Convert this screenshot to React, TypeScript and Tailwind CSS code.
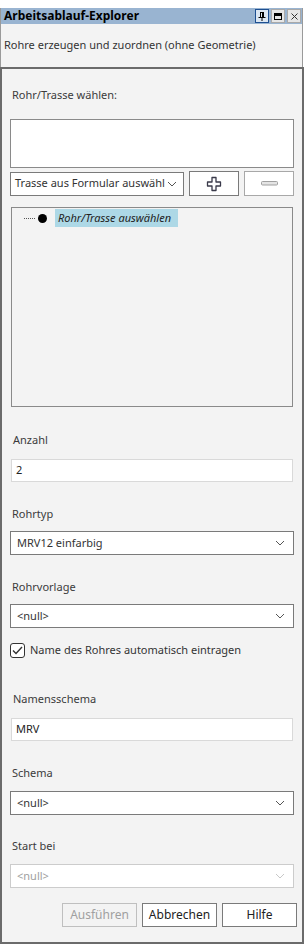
import React from 'react';

const font = { fontFamily: '"Noto Sans", "Open Sans", sans-serif' };

// kleiner Pfeil für Auswahllisten
function Chevron({ disabled }: { disabled?: boolean }) {
  return (
    <svg width="10" height="6" viewBox="0 0 10 6" className="shrink-0">
      <path d="M1 1 L5 5 L9 1" fill="none" stroke={disabled ? '#c8c8c8' : '#555'} strokeWidth="1" />
    </svg>
  );
}

function Select({ value, disabled }: { value: string; disabled?: boolean }) {
  return (
    <div
      className={`flex h-6 items-center justify-between border bg-white pl-1.5 pr-2 text-[11px] ${
        disabled ? 'border-[#cccccc] text-[#a0a0a0]' : 'border-[#7a7a7a] text-[#333]'
      }`}
    >
      <span>{value}</span>
      <Chevron disabled={disabled} />
    </div>
  );
}

function Label({ children, className = '' }: { children: React.ReactNode; className?: string }) {
  return <div className={`h-4 text-[11px] leading-4 text-[#3b3b3b] ${className}`}>{children}</div>;
}

function TextInput({ value }: { value: string }) {
  return (
    <div className="mx-px flex h-[23px] items-center border border-[#d9d9d9] bg-white pl-1 text-[11px] text-[#222]">
      {value}
    </div>
  );
}

function TitleButton({ children, active }: { children: React.ReactNode; active?: boolean }) {
  return (
    <div
      className={`flex h-[14px] w-[14px] items-center justify-center border ${
        active ? 'border-[#1d4f91] bg-[#dbe6f2]' : 'border-[#a9a9a9] bg-[#e6e6e6]'
      }`}
    >
      {children}
    </div>
  );
}

export default function App() {
  return (
    <div className="flex h-[946px] w-[304px] flex-col bg-white" style={font}>
      <div className="h-2" />

      {/* Kopfbereich */}
      <div className="w-[303px] border-x border-[#9a9a9a]">
        <div className="flex h-4 items-center justify-between bg-[#99b4d1] pl-[3px] pr-[1px]">
          <span className="text-[12px] font-bold leading-4 text-black">Arbeitsablauf-Explorer</span>
          <div className="flex gap-[2px]">
            <TitleButton active>
              <svg width="8" height="9" viewBox="0 0 8 9">
                <path d="M2 0.5 H6 M2.5 0.5 V5 M5.5 0.5 V5 M0.5 5.5 H7.5 M4 5.5 V9" stroke="#000" strokeWidth="1" fill="none" />
                <rect x="4" y="1" width="1" height="4" fill="#000" />
              </svg>
            </TitleButton>
            <TitleButton>
              <svg width="8" height="7" viewBox="0 0 8 7">
                <rect x="0.5" y="0.5" width="7" height="6" fill="none" stroke="#000" />
                <rect x="0" y="0" width="8" height="3" fill="#000" />
              </svg>
            </TitleButton>
            <TitleButton>
              <svg width="7" height="7" viewBox="0 0 7 7">
                <path d="M0.5 0.5 L6.5 6.5 M6.5 0.5 L0.5 6.5" stroke="#333" strokeWidth="1" />
              </svg>
            </TitleButton>
          </div>
        </div>
        <div className="flex h-[43px] items-center bg-[#f3f3f3] pl-[3px] text-[11px] text-[#333]">
          Rohre erzeugen und zuordnen (ohne Geometrie)
        </div>
      </div>

      {/* Hauptbereich */}
      <div className="flex h-[877px] w-[304px] flex-col border-2 border-[#6b6b6b] bg-[#f3f3f3] px-2">
        <Label className="ml-0.5 mt-[18px]">Rohr/Trasse wählen:</Label>
        <div className="mt-4 h-[49px] border border-[#8a8a8a] bg-white" />

        <div className="mt-[3px] flex h-[25px] items-center gap-[5px]">
          <div className="flex h-6 w-[174px] items-center justify-between border border-[#7a7a7a] bg-white pl-[4px] pr-[6px] text-[11px] text-[#333]">
            <span className="whitespace-nowrap">Trasse aus Formular auswähl</span>
            <Chevron />
          </div>
          <div className="flex h-[25px] w-[50px] items-center justify-center border border-[#7a7a7a] bg-white">
            <svg width="16" height="16" viewBox="0 0 16 16">
              <path
                d="M6 1.5 H10 V6 H14.5 V10 H10 V14.5 H6 V10 H1.5 V6 H6 Z"
                fill="#fff"
                stroke="#3a3a4a"
                strokeWidth="1.3"
                strokeLinejoin="round"
              />
            </svg>
          </div>
          <div className="flex h-[25px] w-[50px] items-center justify-center border border-[#a8a8a8] bg-white">
            <svg width="17" height="5" viewBox="0 0 17 5">
              <rect x="0.5" y="0.5" width="16" height="3.5" rx="1" fill="#e4e4e4" stroke="#a0a0a0" />
            </svg>
          </div>
        </div>

        <div className="mx-px mt-[11px] h-[200px] border border-[#8a8a8a] bg-[#f3f3f3] pt-px">
          <div className="flex h-[18px] items-center">
            <span className="ml-[12px] w-[11px] border-t border-dotted border-[#555]" />
            <span className="ml-[3px] h-[9px] w-[9px] rounded-full bg-black" />
            <span className="ml-[8px] bg-[#add8e6] pl-[3px] pr-[7px] text-[11px] italic leading-[18px] text-[#222]">
              Rohr/Trasse auswählen
            </span>
          </div>
        </div>

        <Label className="ml-[3px] mt-[25px]">Anzahl</Label>
        <div className="mt-[11px]">
          <TextInput value="2" />
        </div>

        <Label className="ml-0.5 mt-[24px]">Rohrtyp</Label>
        <div className="mt-[9px]">
          <Select value="MRV12 einfarbig" />
        </div>

        <Label className="ml-0.5 mt-[24px]">Rohrvorlage</Label>
        <div className="mt-[9px]">
          <Select value="<null>" />
        </div>

        <div className="mt-[14px] flex h-4 items-center gap-[5px]">
          <div className="flex h-[15px] w-[15px] items-center justify-center rounded-[3px] border border-[#333] bg-white">
            <svg width="11" height="9" viewBox="0 0 11 9">
              <path d="M1 4.5 L4 7.5 L10 1" fill="none" stroke="#333" strokeWidth="1.4" />
            </svg>
          </div>
          <span className="text-[11px] text-[#333]">Name des Rohres automatisch eintragen</span>
        </div>

        <Label className="ml-[3px] mt-[33px]">Namensschema</Label>
        <div className="mt-[11px]">
          <TextInput value="MRV" />
        </div>

        <Label className="ml-0.5 mt-[24px]">Schema</Label>
        <div className="mt-[10px]">
          <Select value="<null>" />
        </div>

        <Label className="ml-0.5 mt-[23px]">Start bei</Label>
        <div className="mt-[10px]">
          <Select value="<null>" disabled />
        </div>

        <div className="mt-[15px] flex justify-end gap-[5px]">
          <button className="h-6 w-[75px] border border-[#bfbfbf] bg-[#f3f3f3] text-[12px] text-[#a0a0a0]">
            Ausführen
          </button>
          <button className="h-6 w-[75px] border border-[#7a7a7a] bg-white text-[12px] text-[#222]">
            Abbrechen
          </button>
          <button className="mr-[-3px] h-6 w-[75px] border border-[#7a7a7a] bg-white text-[12px] text-[#222]">
            Hilfe
          </button>
        </div>
      </div>
    </div>
  );
}
